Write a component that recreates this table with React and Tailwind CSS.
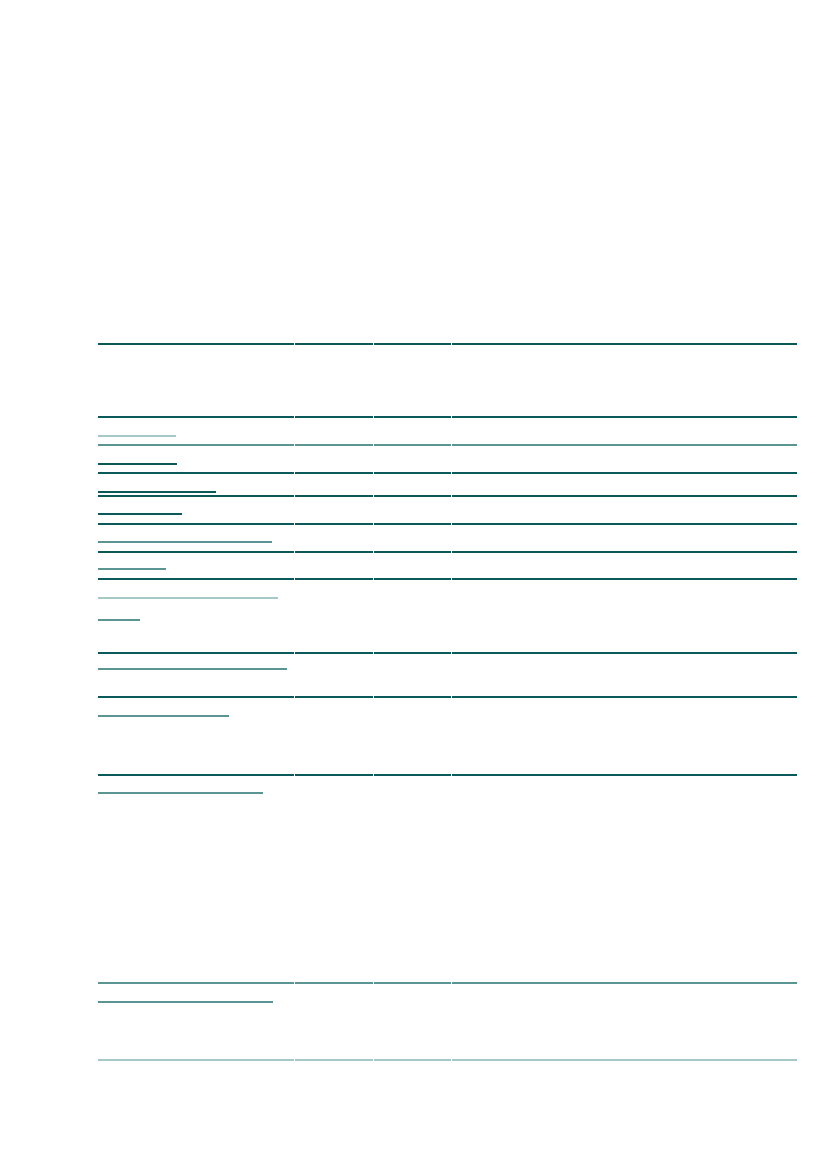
import React from "react";

const D = "bg-[#0b5958]";
const M = "bg-[#5a9593]";
const L = "bg-[#a6c8c7]";

const rows = [
  { h: "h-[73px]", line: D, marks: [] },
  { h: "h-[28px]", line: D, marks: [{ mt: "mt-[17px]", w: "w-[78px]", c: L }] },
  { h: "h-[28px]", line: M, marks: [{ mt: "mt-[17px]", w: "w-[79px]", c: D }] },
  { h: "h-[23px]", line: D, marks: [{ mt: "mt-[17px]", w: "w-[118px]", c: D }] },
  { h: "h-[28px]", line: D, marks: [{ mt: "mt-[16px]", w: "w-[84px]", c: D }] },
  { h: "h-[28px]", line: D, marks: [{ mt: "mt-[16px]", w: "w-[174px]", c: M }] },
  { h: "h-[27px]", line: D, marks: [{ mt: "mt-[15px]", w: "w-[68px]", c: M }] },
  { h: "h-[74px]", line: D, marks: [{ mt: "mt-[17px]", w: "w-[180px]", c: L }, { mt: "mt-[20px]", w: "w-[42px]", c: M }] },
  { h: "h-[44px]", line: D, marks: [{ mt: "mt-[14px]", w: "w-[189px]", c: M }] },
  { h: "h-[78px]", line: D, marks: [{ mt: "mt-[17px]", w: "w-[131px]", c: M }] },
  { h: "h-[208px]", line: D, marks: [{ mt: "mt-[16px]", w: "w-[165px]", c: M }] },
  { h: "h-[77px]", line: M, marks: [{ mt: "mt-[17px]", w: "w-[175px]", c: M }] },
];

function Row({ r }) {
  return (
    <div className={`flex gap-[1px] ${r.h}`}>
      <div className="w-[196px] flex flex-col">
        <div className={`h-[2px] w-full ${r.line}`} />
        {r.marks.map((m, i) => (
          <div key={i} className={`${m.mt} ${m.w} h-[2px] ${m.c}`} />
        ))}
      </div>
      <div className="w-[78px]">
        <div className={`h-[2px] w-full ${r.line}`} />
      </div>
      <div className="w-[77px]">
        <div className={`h-[2px] w-full ${r.line}`} />
      </div>
      <div className="flex-1">
        <div className={`h-[2px] w-full ${r.line}`} />
      </div>
    </div>
  );
}

export default function App() {
  return (
    <div className="w-[827px] h-[1169px] bg-white" style={{ fontFamily: '"Liberation Sans", Arial, sans-serif' }}>
      <div className="pt-[343px] pl-[98px]">
        <div className="w-[699px] flex flex-col">
          {rows.map((r, i) => (
            <Row key={i} r={r} />
          ))}
          <div className="flex gap-[1px]">
            <div className="w-[196px] h-[2px] bg-[#a6c8c7]" />
            <div className="w-[78px] h-[2px] bg-[#a6c8c7]" />
            <div className="w-[77px] h-[2px] bg-[#a6c8c7]" />
            <div className="flex-1 h-[2px] bg-[#a6c8c7]" />
          </div>
        </div>
      </div>
    </div>
  );
}
